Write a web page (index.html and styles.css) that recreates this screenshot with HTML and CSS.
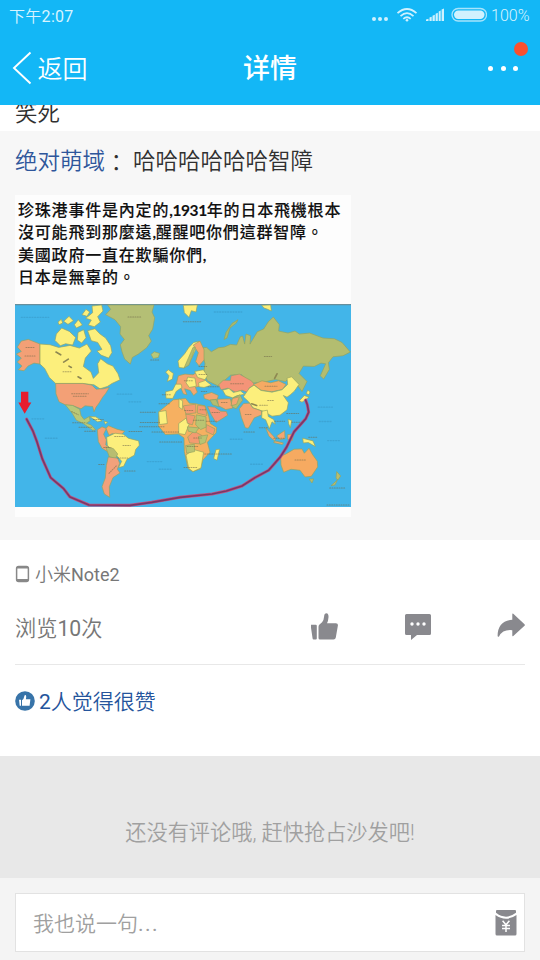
FILE: index.html
```html
<!DOCTYPE html>
<html lang="zh-CN">
<head>
<meta charset="utf-8">
<title>详情</title>
<link rel="stylesheet" href="styles.css">
</head>
<body>
<div class="app">
  <header class="top">
    <div class="status">
      <span class="time">下午<span class="num">2:07</span></span>
      <svg class="status-icons" width="118" height="18" viewBox="0 0 118 18" fill="#d0f1fe">
        <circle cx="5" cy="13" r="2"/><circle cx="11" cy="13" r="2"/><circle cx="17" cy="13" r="2"/>
        <g fill="none" stroke="#d0f1fe" stroke-width="1.7"><path d="M28.500 7.200Q38 -1.200 47.500 7.200"/><path d="M31.500 10.100Q38 4.300 44.500 10.100"/><path d="M34.300 12.800Q38 9.700 41.700 12.800"/></g>
        <circle cx="38" cy="14.200" r="1.300"/>
        <path d="M57 15v-1.500l2.500-.7V15zM60.500 15v-3.500l2.200-.8V15zM63.500 15V9.700l2.300-1V15zM66.600 15V7.800l2.200-1V15zM69.700 15V5.600l2-1V15zM72.600 15V3.500l2.400-1V15z"/>
        <rect x="83" y="2.500" width="34.500" height="12.500" rx="6.200" fill="none" stroke="#a7e4fc" stroke-width="1.300"/>
        <rect x="85" y="4.400" width="30.500" height="8.600" rx="4.200"/>
      </svg>
      <span class="percent">100%</span>
    </div>
    <nav class="bar">
      <div class="back">
        <svg width="20" height="34" viewBox="0 0 20 34"><path d="M18.500 1.500 2 17 18.500 32.500" fill="none" stroke="#fff" stroke-width="1.900"/></svg>
        <span>返回</span>
      </div>
      <h1 class="title">详情</h1>
      <div class="more"><i></i><i></i><i></i><b class="badge"></b></div>
    </nav>
  </header>

  <div class="previous"><span>笑死</span></div>

  <section class="quote">
    <p class="quote-text"><span class="author">绝对萌域</span><span class="colon" lang="zh-TW">：</span><span>哈哈哈哈哈哈智障</span></p>
    <figure class="photo">
      <div class="caption" lang="zh-TW">
        <p>珍珠港事件是內定的<span class="latin">,1931</span>年的日本飛機根本</p>
        <p>沒可能飛到那麼遠<span class="latin">,</span>醒醒吧你們這群智障。</p>
        <p>美國政府一直在欺騙你們<span class="latin">,</span></p>
        <p>日本是無辜的。</p>
      </div>
      <svg class="map" viewBox="15 28 1008 608" preserveAspectRatio="none">
        <rect x="15" y="28" width="1008" height="608" fill="#42b5e9"/>
        <path d="M15 30H1023" stroke="#668f9d" stroke-width="4"/>
        <g stroke="#94a35f" stroke-width="2" stroke-linejoin="round">
          <!-- North America -->
          <path fill="#f3a076" d="M22 157 34 139 55 134 90 148V208L72 205 54 214 42 228 25 225 36 214 22 202 34 190 19 178 34 170z"/>
          <path fill="#fcef7c" d="M90 148 120 150 146 158 180 152 208 160 231 148 244 169 226 190 220 215 243 232 250 251 266 234 263 207 272 192 292 207 309 214 324 237 330 255 306 266 292 275 270 282 252 270 218 266H137L118 248 104 221 90 208z"/>
          <path fill="#fcef7c" d="M139 118 155 100 178 110 197 128 188 151 167 147 151 153 135 137zM161 80 177 65 190 78 174 89zM144 82 154 74 158 85 147 90zM193 90 205 75 217 91 199 100zM204 113 221 105 228 129 215 145 202 136zM216 60 228 44 239 52 231 65zM246 34 275 31 279 49 263 66 271 82 253 96 235 91 244 76 227 71 248 54zM233 108 255 102 269 117 287 130 302 153 306 173 296 190 273 181 261 169 276 164 263 143 244 138z"/>
          <path fill="#f3a076" d="M137 266H218L246 271 258 283 279 282 298 278 287 296 278 307 267 325 258 337 252 351 248 335 225 333 213 342 188 332 166 330 147 321 138 297z"/>
          <path fill="#b8c878" d="M166 330 188 332 209 343 213 362 222 374 238 365 240 378 229 385 244 391 257 405 248 406 220 386 199 376 187 356z"/>
          <path fill="#fcef7c" d="M239 365 257 366 276 378 263 381zM282 379 293 382 286 388z"/>
          <path fill="#b4bf75" d="M287 60 302 44 293 31H432L426 52 434 69 428 103 416 123 424 139 410 159 385 178 367 188 361 208 344 193 336 171 331 150 343 134 330 118 332 96 315 75z"/>
          <path fill="#b8c878" d="M423 179 433 171 449 176 445 188 430 191z"/>
          <!-- South America -->
          <path fill="#f3a076" d="M262 405 276 396 289 401 281 418 289 435 287 450 304 461 311 486 291 469 276 460 265 440z"/>
          <path fill="#f8ab69" d="M288 400 296 393 321 403 344 409 330 423 307 416 297 421z"/>
          <path fill="#fcef7c" d="M290 427 315 415 340 418 355 430 386 438 388 451 377 464 373 481 351 493 341 514 326 518 335 499 316 478 292 451z"/>
          <path fill="#b8bd70" d="M287 456 310 461 323 477 317 490 298 486z"/>
          <path fill="#f1a17b" d="M295 486 323 490 329 505 322 523 330 534 309 548 298 575 299 607 283 597 276 575 286 549 289 512z"/>
        </g>
        <g transform="translate(510 0)" stroke="#94a35f" stroke-width="2" stroke-linejoin="round">
          <!-- Eurasia -->
          <path fill="#b3bd70" d="M62 160 80 158 94 171 115 159 133 157 151 149 170 151 181 126 188 124 194 148 198 118 212 123 210 148 232 111 251 103 265 81 280 67 298 90 296 109 324 115 345 109 358 118 389 115 429 130 463 132 486 143 511 172 489 183 459 186 445 204 448 224 431 253 421 243 437 207 423 205 403 215 370 214 357 236 381 260 366 290 350 268 328 250 316 260 286 254 251 262 213 265 184 239 152 241 124 265 116 274 82 258 72 230 75 206z"/>
          <path fill="#a8b96c" d="M132 134 138 113 156 86 174 75 169 85 150 100 141 130z"/>
          <path fill="#fcef7c" d="M10 32 52 31 48 52 34 48 27 68 13 54zM245 32 272 31 274 49 263 44 252 40zM-35 225-20 236-23 253-38 260-33 243-43 232z"/>
          <path fill="#fcef7c" d="M-3 218-6 199 14 177 26 159 41 143 57 140 44 171 35 191 25 207 12 220z"/>
          <path fill="#f4a670" d="M40 151 60 139 72 165 72 196 57 213 47 200 55 174z"/>
          <path fill="#b3bd70" d="M12 220 26 188 39 158 46 157 37 184 27 211z"/>
          <path fill="#f4a670" d="M-5 243 15 238 39 240 53 231 61 245 77 256 71 273 46 277 52 292 41 302 31 287 14 282 21 300 10 297 1 276-15 282z"/>
          <path fill="#fcef7c" d="M-43 291-22 286-13 268 3 268 6 278-11 289-22 311-42 310zM44 230 70 225 82 243 75 255 53 248zM56 264 76 257 94 271 72 278 57 276zM23 247 45 250 49 274 28 278 18 264z"/>
          <path fill="#f49478" d="M116 270 130 256 151 257 153 243 178 238 214 258 224 270 207 280 206 294 186 286 166 292 144 280 123 285z"/>
          <path fill="#fcef7c" d="M128 286 147 281 160 293 181 288 194 298 170 303 158 309 137 302z"/>
          <path fill="#f4a670" d="M71 300 95 293 115 302 112 313 88 316 73 311z"/>
          <path fill="#b3bd70" d="M90 316 108 314 118 336 98 330zM158 310 180 300 188 316 168 342 148 332z"/>
          <path fill="#f4a670" d="M112 313 151 312 158 340 137 344 116 333zM157 311 178 306 170 328 153 333z"/>
          <path fill="#f49478" d="M83 335 104 337 122 349 139 350 143 361 108 383 94 360z"/>
          <path fill="#f6aa63" d="M220 269 246 258 272 264 296 258 318 269 307 284 275 291 243 286z"/>
          <path fill="#fcef7c" d="M208 280 222 271 243 287 276 292 306 285 323 269 321 250 335 246 357 269 343 289 332 299 321 307 310 302 325 324 321 345 300 361 276 364 251 350 219 339 206 321 190 306z"/>
          <path fill="#f4a670" d="M178 342 191 326 209 325 218 339 244 348 245 360 223 369 205 400 196 399 184 367z"/>
          <path fill="#fcef7c" d="M246 349 262 346 265 365 281 374 286 388 276 381 268 402 257 375 245 369zM383 286 390 291 387 300 379 296zM373 302 387 307 366 322 358 318z"/>
          <path fill="#f4a670" d="M257 399 287 431 284 438 267 424zM290 423 314 407 315 431 300 434zM284 438 310 444 307 449 281 443zM323 419 340 418 337 437 323 433z"/>
          <path fill="#fcef7c" d="M368 430 399 438 406 455 385 443 370 444zM324 373 335 377 331 399 326 387z"/>
          <!-- Africa -->
          <path fill="#f6b061" d="M-63 350-38 330-20 315 17 311 28 325 48 327 75 333 86 363 91 386 110 398 108 414 82 442 90 472 68 496 61 522 38 530 24 521 13 470 12 429-5 417-44 419-65 393z"/>
          <path fill="#fcef7c" d="M-64 351-42 347-38 386-61 389zM-3 312 8 318 7 344-3 337zM-4 386 18 370 27 389 15 419-4 416zM18 480 41 464 71 472 63 519 39 530 26 520zM108 464 119 463 111 496 101 491z"/>
          <path fill="#f49a70" d="M10 333 47 328 48 354 18 358zM53 331 75 334 81 362 52 355zM23 426 42 409 66 422 58 447 29 444zM79 389 105 402 100 420 78 410zM17 357 45 363 37 390 22 385z"/>
          <path fill="#b9c472" d="M49 360 78 366 78 397 62 404 47 390zM22 396 57 399 46 414 25 409zM55 425 83 420 76 443 60 449zM17 452 43 448 44 470 20 475z"/>
          <!-- Australia and New Zealand -->
          <path fill="#f6aa61" d="M302 484 318 477 342 463 366 462 373 475 387 460 397 478 412 499 413 516 394 544 375 546 360 526 333 523 311 532 303 510z"/>
          <path fill="#b9bd6e" d="M387 552 401 552 396 564zM470 530 482 543 474 555 468 550zM453 572 472 555 465 570z"/>
        </g>
        <g fill="none" stroke-linecap="round">
          <path stroke="#358fb8" stroke-width="4" opacity=".4" stroke-dasharray="3 5" d="M34 68H116M322 298H369M357 321H393M106 430H145M412 500H458M448 523H485M66 372H102M613 52H695M661 433H697M722 508H761M925 337H967M928 380H966M953 437H989"/>
          <path stroke="#706749" stroke-width="3" opacity=".55" stroke-dasharray="3 4" d="M48 158H72M45 184H75M354 67H392M159 231H186M185 297H235M190 304H230M185 350 205 360M188 384H225M207 397H247M224 409H258M250 374H280M314 425H343M357 410H397M281 458H303M339 452H361M323 489H353M297 535 320 512M344 528H378M422 196H448M266 509H282M763 185H785M662 267H701M765 274H801M773 317H793M749 331H772M706 359H723M702 411H736M855 495H887M959 579H1006M391 352H440M391 383H448M389 396H463M426 411H508M449 441H516M457 300H483M447 327H482M520 81H572M550 376H582M570 345H588M524 347H552M551 429H574M532 455H564M589 379H622M584 477H668M522 518H562M606 353H628M634 323H652M594 276H626M574 290H590M523 258H550M567 215H590M567 239H590M748 399H775M795 379H824M830 356H866M845 382H874M791 430H824M896 427H920M951 630H1019"/>
          <path stroke="#8e8852" stroke-width="5" d="M138 172 152 180M161 202 175 193M177 214 184 218M204 246 213 251M794 251 801 237M725 327 740 332"/>
        </g>
        <g fill="none" stroke-linejoin="round" stroke-linecap="round">
          <path stroke="#c25182" stroke-width="9" d="M50 373 69 409 81 441 97 492 122 548 160 580 180 606 237 630 360 631 425 622 510 607 606 597 649 588 696 573 735 548 776 526 811 486 829 458 852 411 887 372 896 352 892 330 887 316"/>
          <path stroke="#763a69" stroke-width="5" d="M50 373 69 409 81 441 97 492 122 548 160 580 180 606 237 630 360 631 425 622 510 607 606 597 649 588 696 573 735 548 776 526 811 486 829 458 852 411 887 372 896 352 892 330 887 316"/>
        </g>
        <path fill="#e71c2e" d="M33 291H55V323H64L44 357 25 323H33z"/>
      </svg>
    </figure>
  </section>

  <section class="details">
    <div class="device">
      <svg width="15" height="18" viewBox="0 0 15 18"><rect x="1.600" y="1.500" width="11.800" height="15" rx="2" fill="none" stroke="#888" stroke-width="1.500"/><path d="M2 2.500h11M2 15h11" stroke="#888" stroke-width="2.200"/></svg>
      <span>小米<span class="num">Note2</span></span>
    </div>
    <div class="actions">
      <span class="views">浏览<span class="num">10</span>次</span>
      <div class="buttons">
        <svg width="28" height="28" viewBox="0 1 28 28" fill="#89898e"><path d="M1 12.200h4.300q1 0 1 1V26q0 1-1 1H3.200q-1 0-1.100-1L.2 13.200q-.1-1 .8-1zM8 14.200q0-1.400 1-2.200l2.600-2.300q1.700-1.700 2-5.700.2-3.300 2.400-3.300 2.200.2 2 4-.2 3.500-1.500 6h8.900q2.300 0 2 2.300L25.300 25q-.3 2-2.300 2H9.500Q8 27 8 25.500z" transform="translate(-.5 .5)"/></svg>
        <svg width="28" height="28" viewBox="0 1 28 28"><path fill="#89898e" d="M2.500 2h23q1.500 0 1.500 1.500v18q0 1.500-1.500 1.500H13l-6 5v-5H2.500Q1 23 1 21.500v-18Q1 2 2.500 2z"/><g fill="#fff"><circle cx="8" cy="12" r="1.700"/><circle cx="14" cy="12" r="1.700"/><circle cx="20" cy="12" r="1.700"/></g></svg>
        <svg width="28" height="28" viewBox="0 0 28 28"><path fill="#89898e" d="M15.300 1.200q0-1.200 1-.4l11.200 10.400q.8.800 0 1.600L16.300 23q-1 .8-1-.5v-5.300Q5.700 16.200 2 23.500q-1.300 1-1.400-.7Q.8 7.800 15.300 6.700z"/></svg>
      </div>
    </div>
    <div class="likes">
      <svg width="20" height="20" viewBox="0 0 20 20"><circle cx="10" cy="10" r="9.800" fill="#3874a9"/><path fill="#fff" d="M4 8.700h2v6H4.700zM7 9.300q1.900-1.200 2.200-3.800.2-1.800 1.300-1.500 1.200.4.400 4.200h4.500l-.8 6.500H7z"/></svg>
      <span><span class="num">2</span>人觉得很赞</span>
    </div>
  </section>

  <div class="empty">还没有评论哦, 赶快抢占沙发吧!</div>

  <footer class="composer">
    <div class="field">
      <span>我也说一句<span class="dots">...</span></span>
      <svg width="22" height="26" viewBox="0 0 22 26"><path fill="#89898e" d="M2 0h18q1 0 1 1v1.800Q11 10.500 1 2.800V1q0-1 1-1z"/><path fill="#89898e" d="M.5 5Q11 12.500 21.500 5v19q0 1.500-1.500 1.500H2Q.5 25.500 .5 24z"/><path d="m7.600 10.800 3.400 4 3.400-4M11 14.800V22M7 15.500h8M7 18.500h8" fill="none" stroke="#fff" stroke-width="1.500"/></svg>
    </div>
  </footer>
</div>
</body>
</html>
```
FILE: styles.css
```css
* { box-sizing: border-box; }
body, h1, p, figure { margin: 0; }
body { font-family: Roboto, "Noto Sans CJK SC", sans-serif; font-weight: 350; color: #303030; }
svg { display: block; flex: none; }
.num { font-weight: 400; }
.app { width: 540px; height: 960px; display: flex; flex-direction: column; overflow: hidden; background: #fff; }
.app > * { flex: none; }

.top { height: 105px; background: #13b7f6; color: #fff; }
.status { height: 31px; display: flex; align-items: center; padding: 0 9px; color: #d8f4ff; font-size: 16px; white-space: nowrap; }
.time { letter-spacing: .3px; padding-bottom: 2px; }
.status-icons { margin: 0 0 1px auto; }
.percent { margin-left: 4px; width: 40px; font-size: 16px; }
.bar { height: 74px; display: grid; grid-template-columns: 1fr auto 1fr; align-items: center; padding: 0 22px 0 12px; }
.back { display: flex; align-items: center; gap: 5.500px; height: 74px; font-size: 25px; }
.back span { padding-bottom: 2px; }
.title { font-size: 27px; font-weight: 500; line-height: 74px; height: 74px; margin-left: 10px; padding-top: 1px; }
.more { position: relative; justify-self: end; display: flex; gap: 7.500px; }
.more i { width: 5px; height: 5px; border-radius: 50%; background: #fff; }
.badge { position: absolute; top: -24px; right: -10px; width: 14px; height: 14px; border-radius: 50%; background: #f9502f; }

.previous { height: 26px; padding-left: 15px; overflow: hidden; display: flex; align-items: flex-end; font-size: 22.400px; line-height: 35px; }

.quote { height: 409px; padding: 0 15px; background: #f7f7f7; }
.quote-text { height: 64px; display: flex; font-size: 22.500px; line-height: 61px; }
.author { color: #2e569b; }
.colon { width: 28px; font-family: "Noto Sans CJK TC", sans-serif; }
.photo { width: 336px; height: 322px; background: #fdfdfd; }
.caption { height: 109px; padding: 3px 0 0 3px; color: #111; font: 500 16px/22.500px "Noto Sans CJK TC", sans-serif; letter-spacing: .8px; white-space: nowrap; -webkit-text-stroke: .1px #111; }
.caption p { height: 22.300px; }
.latin { font-family: Lato, sans-serif; font-weight: 700; font-size: 15.500px; letter-spacing: -.4px; line-height: 1; }
.map { width: 336px; height: 203px; filter: blur(.5px); }

.details { height: 216px; padding: 18px 15px 0; }
.device { height: 32px; display: flex; align-items: center; gap: 5px; font-size: 18px; color: #777; }
.device > span { padding-bottom: 2px; }
.actions { height: 75px; display: flex; align-items: center; justify-content: space-between; border-bottom: 1px solid #e8e8e8; font-size: 21.200px; color: #777; }
.views { padding-bottom: 2px; }
.buttons { display: flex; gap: 65px; }
.likes { height: 72px; display: flex; align-items: center; gap: 4px; color: #24549c; font-size: 21px; }
.likes > span { padding-bottom: 3px; }

.empty { height: 122px; display: flex; align-items: center; justify-content: center; padding-top: 27px; background: #e8e8e8; color: #a0a0a0; font-size: 21.200px; }
.composer { height: 82px; padding: 15px 15px 8px; background: #f4f4f4; }
.field { height: 59px; display: flex; align-items: center; justify-content: space-between; padding: 0 7px 0 17px; border: 1px solid #e2e2e2; background: #fff; color: #a0a0a0; font-size: 21px; }
.field > span { padding-bottom: 2px; }
.dots { letter-spacing: 1.500px; font-weight: 400; }
```
